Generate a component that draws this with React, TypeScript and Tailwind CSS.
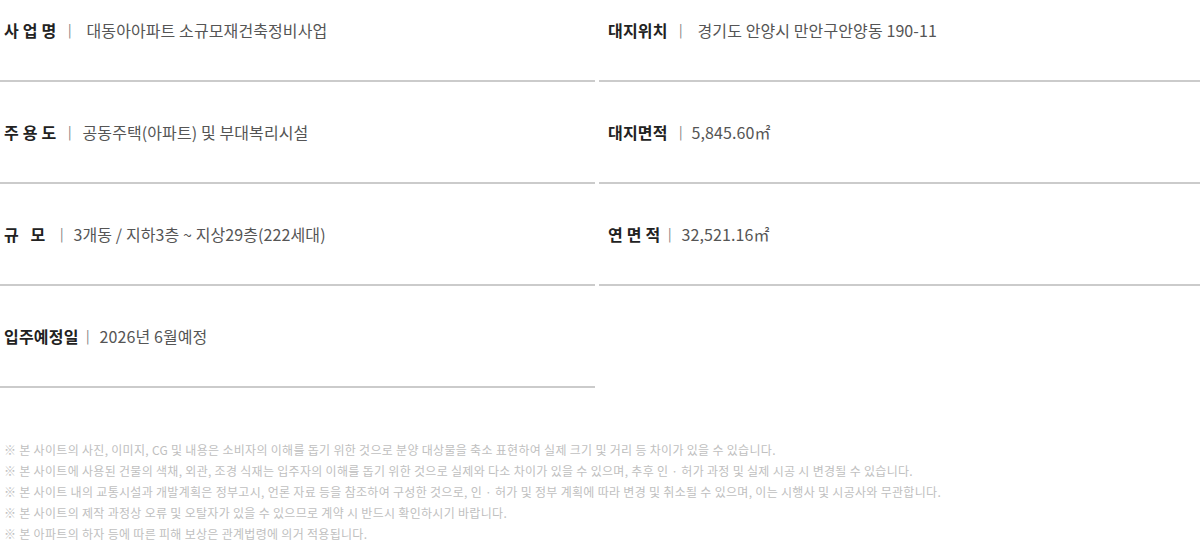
import React from 'react';

type Row = { label: string; value: string; labelW: string; barGap: string; valueGap: string };

const rows: Row[] = [
  { label: '사 업 명', value: '대동아아파트 소규모재건축정비사업', labelW: 'w-[53px]', barGap: 'ml-[11px]', valueGap: 'ml-[15px]' },
  { label: '대지위치', value: '경기도 안양시 만안구안양동 190-11', labelW: 'w-[58px]', barGap: 'ml-[13px]', valueGap: 'ml-[15px]' },
  { label: '주 용 도', value: '공동주택(아파트) 및 부대복리시설', labelW: 'w-[53px]', barGap: 'ml-[11px]', valueGap: 'ml-[11px]' },
  { label: '대지면적', value: '5,845.60㎡', labelW: 'w-[58px]', barGap: 'ml-[13px]', valueGap: 'ml-[9px]' },
  { label: '규   모', value: '3개동 / 지하3층 ~ 지상29층(222세대)', labelW: 'w-[43px]', barGap: 'ml-[13px]', valueGap: 'ml-[10px]' },
  { label: '연 면 적', value: '32,521.16㎡', labelW: 'w-[53px]', barGap: 'ml-[7px]', valueGap: 'ml-[10px]' },
  { label: '입주예정일', value: '2026년 6월예정', labelW: 'w-[73px]', barGap: 'ml-[9px]', valueGap: 'ml-[10px]' },
];

const notes = [
  '※ 본 사이트의 사진, 이미지, CG 및 내용은 소비자의 이해를 돕기 위한 것으로 분양 대상물을 축소 표현하여 실제 크기 및 거리 등 차이가 있을 수 있습니다.',
  '※ 본 사이트에 사용된 건물의 색채, 외관, 조경 식재는 입주자의 이해를 돕기 위한 것으로 실제와 다소 차이가 있을 수 있으며, 추후 인 · 허가 과정 및 실제 시공 시 변경될 수 있습니다.',
  '※ 본 사이트 내의 교통시설과 개발계획은 정부고시, 언론 자료 등을 참조하여 구성한 것으로, 인 · 허가 및 정부 계획에 따라 변경 및 취소될 수 있으며, 이는 시행사 및 시공사와 무관합니다.',
  '※ 본 사이트의 제작 과정상 오류 및 오탈자가 있을 수 있으므로 계약 시 반드시 확인하시기 바랍니다.',
  '※ 본 아파트의 하자 등에 따른 피해 보상은 관계법령에 의거 적용됩니다.',
];

const font = { fontFamily: '"Noto Sans CJK KR", "Noto Sans", sans-serif' };

export default function App() {
  return (
    <div className="w-[1200px] h-[550px] overflow-hidden bg-white" style={font}>
      <div className="-mt-5 grid grid-cols-[595px_601px] gap-x-1">
        {rows.map((r, i) => (
          <div
            key={i}
            className={`h-[102px] flex items-center border-b-2 border-[#cbcbcb] ${i % 2 === 1 ? 'pl-[9px]' : 'pl-1'}`}
          >
            <span className={`${r.labelW} whitespace-pre text-[16px] leading-5 font-bold text-[#222] tracking-[0.2px]`}>
              {r.label}
            </span>
            <span className={`${r.barGap} text-[13px] leading-5 text-[#777]`}>|</span>
            <span className={`${r.valueGap} text-[16px] leading-5 text-[#555] tracking-[0.1px]`}>{r.value}</span>
          </div>
        ))}
      </div>
      <div className="mt-[51px] pl-1 flex flex-col">
        {notes.map((n, i) => (
          <p key={i} className="h-[21px] leading-[21px] text-[12px] text-[#c0c0c0] tracking-[0.3px] whitespace-nowrap">
            {n}
          </p>
        ))}
      </div>
    </div>
  );
}
